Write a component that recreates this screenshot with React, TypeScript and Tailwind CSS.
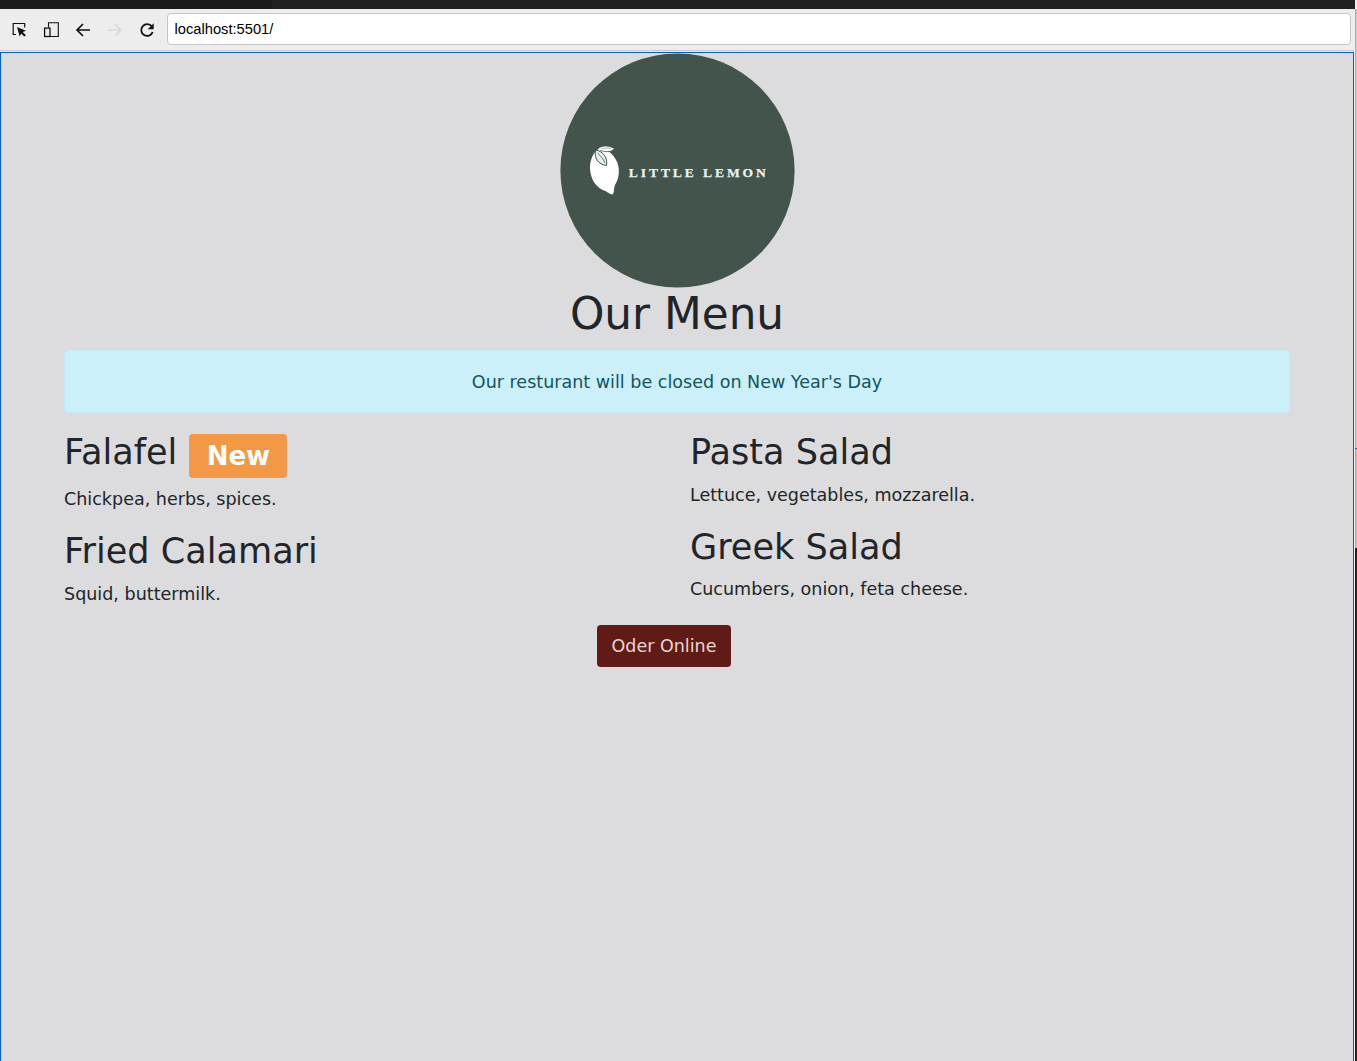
import React from "react";

function InspectIcon() {
  return (
    <svg width="16" height="16" viewBox="0 0 16 16" className="shrink-0">
      <path d="M5 12.500H2.200V1.500h11.500v4" fill="none" stroke="#111" strokeWidth="1.2" />
      <path d="M6 5l9 3.700-3.300 1.400 3.200 3.100-1.500 1.400-3.200-3.200-1.500 3z" fill="#111" />
    </svg>
  );
}

function DeviceIcon() {
  return (
    <svg width="16" height="16" viewBox="0 0 16 16" className="shrink-0">
      <path d="M5.500 5.500V.700h9.800v13.800H7" fill="none" stroke="#111" strokeWidth="1.1" />
      <rect x="1.600" y="6.100" width="5.400" height="8.400" fill="none" stroke="#111" strokeWidth="1.300" />
    </svg>
  );
}

function ArrowIcon({ className }: { className: string }) {
  return (
    <svg width="16" height="16" viewBox="0 0 16 16" className={className}>
      <path d="M15 8H2.200M8 2L2 8l6 6" fill="none" stroke="currentColor" strokeWidth="1.700" />
    </svg>
  );
}

function ReloadIcon() {
  return (
    <svg width="16" height="16" viewBox="0 0 16 16" className="shrink-0">
      <path d="M12.900 4.500A5.900 5.900 0 1 0 13.700 10" fill="none" stroke="#111" strokeWidth="1.800" />
      <path d="M14.700 1.300v5.900H8.800z" fill="#111" />
    </svg>
  );
}

function Logo() {
  return (
    <svg width="235" height="235" viewBox="0 0 235 235" className="block shrink-0">
      <circle cx="117.500" cy="117.500" r="117.100" fill="#43544d" />
      <path
        d="M36 98C31 103 28.500 113 31 122C33 130 38 135 44 137.500C48 139 50 141.500 52.500 141.500C54.500 140 53.500 136 55 132C59 126 60 117 57.500 110C55 104 51 99 46 97C42 95 39 95 36 98Z"
        fill="#fff"
      />
      <path
        d="M37 97C40 92.500 47 91.500 54.500 95.500C51 99.500 46 99 40 97.500"
        fill="#fff"
        stroke="#43544d"
        strokeWidth="0.800"
      />
      <path d="M41 96C45 95 48 95 51 95.500" fill="none" stroke="#78877f" strokeWidth="0.600" />
      <path
        d="M35.500 97C34 105 38 111.500 46.500 112.500C48 105 43 98 35.500 97Z"
        fill="#e9eeeb"
        stroke="#43544d"
        strokeWidth="1"
      />
      <path d="M37.500 100C41 103 43 106 45 110" fill="none" stroke="#43544d" strokeWidth="0.800" />
      <text
        x="68.800"
        y="123.500"
        textLength="137"
        lengthAdjust="spacing"
        fill="#eef2f0"
        stroke="#eef2f0"
        strokeWidth="0.250"
        className="font-['Liberation_Serif',serif] text-[13.5px] font-bold"
      >
        LITTLE LEMON
      </text>
    </svg>
  );
}

function Dish({ name, detail, badge }: { name: string; detail: string; badge?: string }) {
  return (
    <article>
      <h2 className={badge ? "mb-[8.5px] flex h-[46.5px] items-start" : "mb-[8.5px] h-[42px]"}>
        <span className="text-[35.1px] leading-[42px]">{name}</span>
        {badge && (
          <span className="ml-[12px] mt-[2.5px] flex h-[44px] w-[98px] items-center justify-center rounded-[4px] bg-[#f39945] text-[26px] font-bold leading-none text-white">
            {badge}
          </span>
        )}
      </h2>
      <p className="mb-[18px] text-[17.55px] leading-[26px]">{detail}</p>
    </article>
  );
}

export default function App() {
  return (
    <div className="flex h-[1061px] w-[1357px] flex-col overflow-hidden bg-[#ededed]">
      <div className="mr-[2px] flex h-[9px] shrink-0 bg-[#212121]">
        <div className="w-[272px] bg-[#1b1b1b]" />
      </div>
      <div className="flex min-h-0 flex-1">
        <div className="flex w-[1354px] shrink-0 flex-col">
          <header className="flex h-[42px] shrink-0 items-center border-b border-[#c8c8c8] pb-px pl-[11px] pr-[3px]">
            <nav className="flex items-center gap-[16px] pt-px">
              <InspectIcon />
              <DeviceIcon />
              <ArrowIcon className="shrink-0 text-[#111]" />
              <ArrowIcon className="shrink-0 rotate-180 text-[#d8d8d8]" />
              <ReloadIcon />
            </nav>
            <div className="ml-[12px] flex h-[32px] flex-1 items-center rounded-[4px] border border-[#c6c6c6] bg-white pl-[6.5px] font-['Liberation_Sans',sans-serif] text-[14.7px] text-black">
              localhost:5501/
            </div>
          </header>
          <main className="mt-px flex-1 border-x border-t border-[#0060c8] bg-[#dcdcde] px-[63px] font-['DejaVu_Sans',sans-serif] text-[#212529]">
            <div className="flex flex-col items-center">
              <Logo />
              <h1 className="mb-[10px] text-[43.75px] leading-[52px]">Our Menu</h1>
            </div>
            <div className="flex h-[63px] items-center justify-center rounded-[4px] border border-[#c5ebf3] bg-[#cbf0f9] pt-px text-[17.55px] text-[#13545f]">
              Our resturant will be closed on New Year's Day
            </div>
            <section className="mt-[18px] grid grid-cols-2 gap-x-[26px]">
              <div>
                <Dish name="Falafel" badge="New" detail="Chickpea, herbs, spices." />
                <Dish name="Fried Calamari" detail="Squid, buttermilk." />
              </div>
              <div>
                <Dish name="Pasta Salad" detail="Lettuce, vegetables, mozzarella." />
                <Dish name="Greek Salad" detail="Cucumbers, onion, feta cheese." />
              </div>
            </section>
            <button className="ml-[533px] flex h-[42px] w-[134px] items-center justify-center rounded-[4px] bg-[#611b16] pt-px text-[17.5px] text-[#edd5d2]">
              Oder Online
            </button>
          </main>
        </div>
        <div className="w-px bg-[#f2f2f2]" />
        <div className="flex w-[2px] flex-col">
          <div className="h-[439px] border-l border-[#aaaaaa] bg-[#cfcfcf]" />
          <div className="h-px bg-[#17708f]" />
          <div className="h-[99px] border-l border-[#aaaaaa] bg-[#bdbdbd]" />
          <div className="flex-1 bg-[#252315]" />
        </div>
      </div>
    </div>
  );
}
